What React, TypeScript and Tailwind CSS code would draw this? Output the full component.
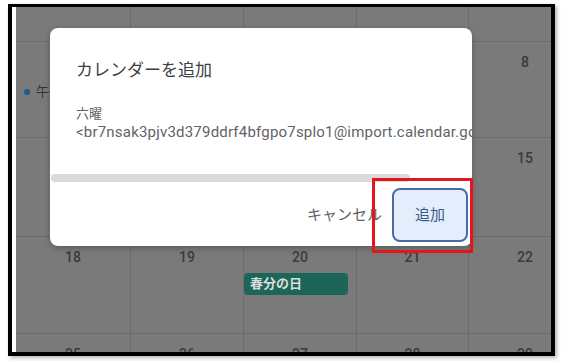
import React from "react";

const font = { fontFamily: 'Roboto, "Noto Sans CJK JP", sans-serif' };

// dates covered by the dialog are left out
const rows: { h: string; days: string[] }[] = [
  { h: "h-[35px]", days: ["", "", "", "", ""] },
  { h: "h-[96px]", days: ["", "", "", "", "8"] },
  { h: "h-[99px]", days: ["", "", "", "", "15"] },
  { h: "h-[97px]", days: ["18", "19", "20", "21", "22"] },
  { h: "h-[97px]", days: ["25", "26", "27", "28", "29"] },
];

const colW = ["w-[115px]", "w-[113px]", "w-[113px]", "w-[112px]", "w-[113px]"];

function Cell({ day, w, row, col }: { day: string; w: string; row: number; col: number }) {
  return (
    <div className={`${w} shrink-0 h-full border-r border-b border-[#6b6b6b] flex flex-col`}>
      {day && (
        <div className="pt-[10px] text-[14px] leading-[20px] font-medium text-[#3a3a3a] text-center">{day}</div>
      )}
      {row === 1 && col === 0 && (
        <div className="mt-[40px] flex items-center pl-[8px] gap-[6px] text-[13px] text-[#333]">
          <span className="w-[6px] h-[6px] rounded-full bg-[#1b5e8c]" />
          <span>午後</span>
        </div>
      )}
      {row === 3 && col === 2 && (
        <div className="mt-[6px] w-[104px] h-[22px] rounded-[4px] bg-[#1b6658] pl-[6px] flex items-center text-[13px] font-bold text-[#dcdcdc]">
          春分の日
        </div>
      )}
    </div>
  );
}

export default function App() {
  return (
    <div className="w-[573px] h-[361px] bg-white pt-[4px] pl-[8px]" style={font}>
      <div className="relative w-[547px] h-[352px] border-black border-l-4 border-r-4 border-b-4 border-t-[3px] flex shadow-[2px_2px_4px_rgba(0,0,0,0.3)]">
        <div className="w-[4px] bg-white shrink-0" />
        <div className="flex-1 bg-[#7a7a7a] overflow-hidden">
          {rows.map((r, ri) => (
            <div key={ri} className={`${r.h} flex`}>
              {r.days.map((d, ci) => (
                <Cell key={ci} day={d} w={colW[ci]} row={ri} col={ci} />
              ))}
            </div>
          ))}
        </div>

        {/* dialog */}
        <div className="absolute left-[38px] top-[21px] w-[422px] h-[218px] bg-white rounded-[8px] shadow-[0_2px_6px_rgba(0,0,0,0.25)] overflow-hidden flex flex-col">
          <div className="pl-[26px] pt-[30px] text-[17px] leading-[24px] text-[#3c4043]">カレンダーを追加</div>
          <div className="mt-[23px] pl-[26px] leading-[18px] text-[#5f6368] whitespace-nowrap">
            <div className="text-[13px]">六曜</div>
            <div className="text-[15px] tracking-[0.2px]">&lt;br7nsak3pjv3d379ddrf4bfgpo7splo1@import.calendar.google.com&gt;</div>
          </div>
          <div className="mt-[33px] ml-[1px] w-[359px] h-[8px] rounded-full bg-[#dadada]" />
          <div className="mt-[6px] flex items-center justify-end pr-[4px] gap-[10px]">
            <span className="text-[15px] text-[#5f6368]">キャンセル</span>
            <button className="w-[76px] h-[54px] rounded-[8px] border-2 border-[#4a6aa0] bg-[#e4edfb] text-[15px] text-[#3d5a8c]">
              追加
            </button>
          </div>
        </div>

        {/* highlight */}
        <div className="absolute left-[360px] top-[171px] w-[101px] h-[75px] border-[3px] border-[#e3161c]" />
      </div>
    </div>
  );
}
